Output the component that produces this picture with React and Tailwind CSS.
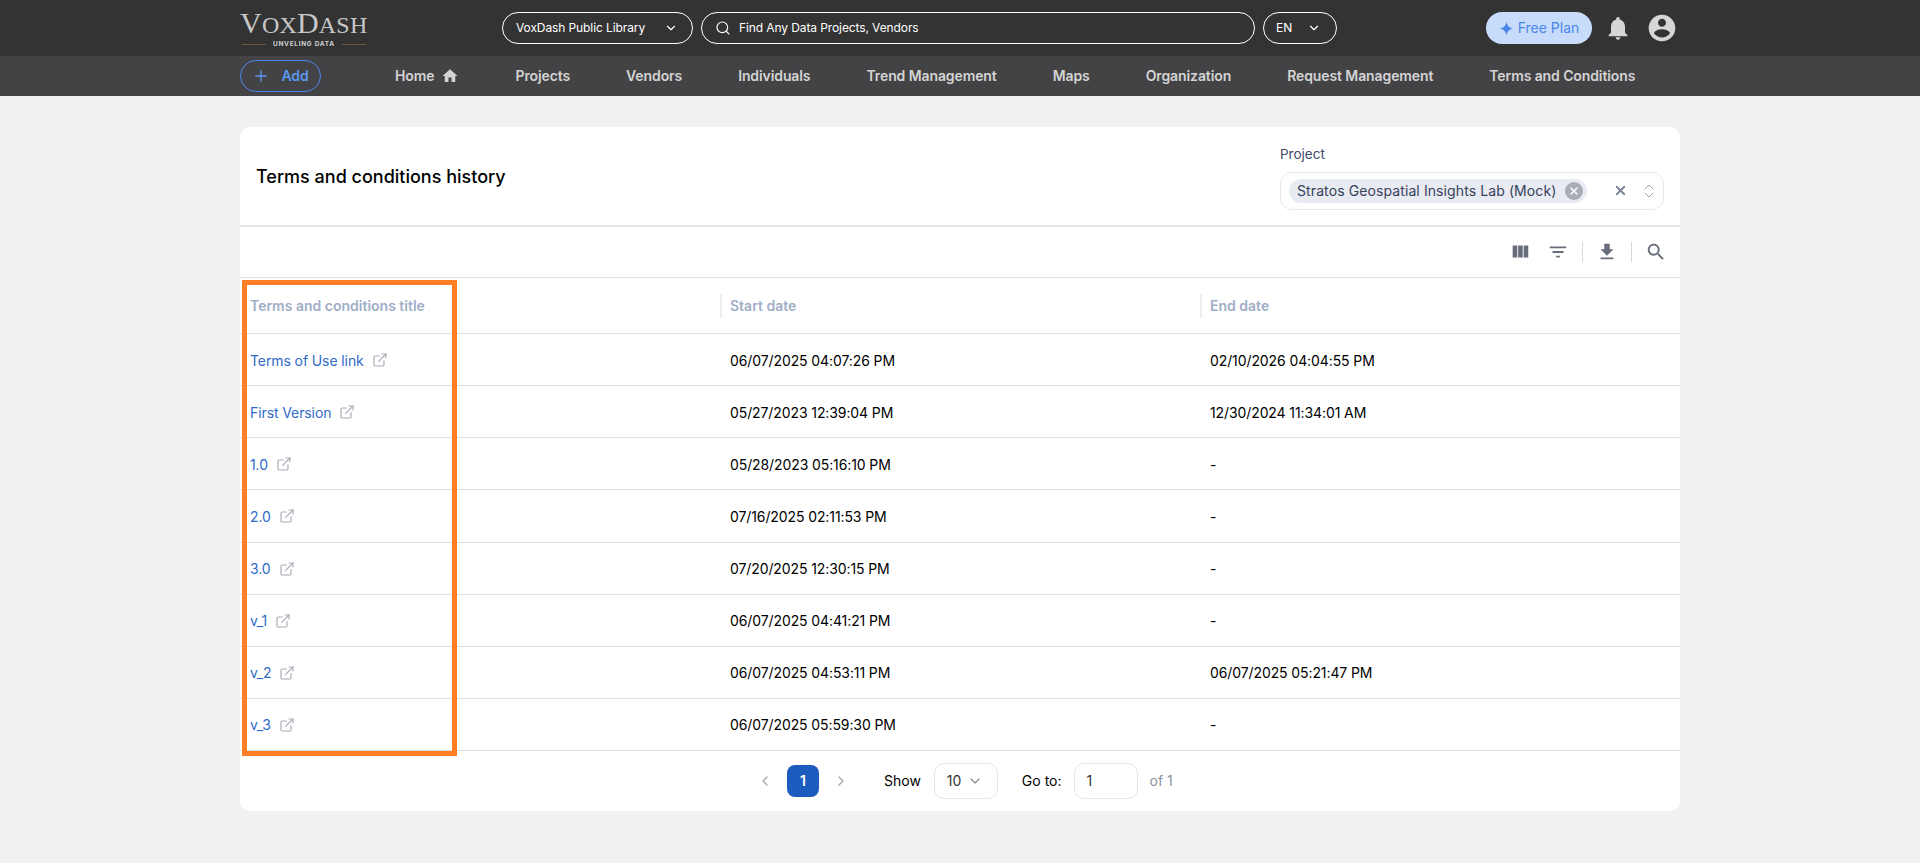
import React from "react";
import { ChevronDown, ChevronLeft, ChevronRight, ChevronUp, ExternalLink, Plus, Search, X } from "lucide-react";

const Mui = ({ d, className }) => (
  <svg viewBox="0 0 24 24" fill="currentColor" className={className}><path d={d} /></svg>
);

const icons = {
  home: "M10 20v-6h4v6h5v-8h3L12 3 2 12h3v8z",
  bell: "M12 22c1.1 0 2-.9 2-2h-4c0 1.1.89 2 2 2zm6-6v-5c0-3.07-1.64-5.64-4.5-6.32V4c0-.83-.67-1.5-1.5-1.5s-1.5.67-1.5 1.5v.68C7.63 5.36 6 7.92 6 11v5l-2 2v1h16v-1l-2-2z",
  account: "M12 2C6.48 2 2 6.48 2 12s4.48 10 10 10 10-4.48 10-10S17.52 2 12 2zm0 3c1.66 0 3 1.34 3 3s-1.34 3-3 3-3-1.34-3-3 1.34-3 3-3zm0 14.2c-2.5 0-4.71-1.28-6-3.22.03-1.99 4-3.08 6-3.08 1.99 0 5.97 1.09 6 3.08-1.29 1.94-3.5 3.22-6 3.22z",
  columns: "M10 18h5V5h-5v13zm-6 0h5V5H4v13zM16 5v13h5V5h-5z",
  filter: "M10 18h4v-2h-4v2zM3 6v2h18V6H3zm3 7h12v-2H6v2z",
  download: "M5 20h14v-2H5v2zM19 9h-4V3H9v6H5l7 7 7-7z",
  search: "M15.5 14h-.79l-.28-.27C15.41 12.59 16 11.11 16 9.5 16 5.91 13.09 3 9.5 3S3 5.91 3 9.5 5.91 16 9.5 16c1.61 0 3.09-.59 4.23-1.57l.27.28v.79l5 4.99L20.49 19l-4.99-5zm-6 0C7.01 14 5 11.99 5 9.5S7.01 5 9.5 5 14 7.01 14 9.5 11.99 14 9.5 14z",
  spark: "M12 1c1.200 6.500 4.500 9.800 11 11-6.500 1.200-9.800 4.500-11 11-1.200-6.500-4.500-9.800-11-11 6.500-1.200 9.800-4.500 11-11z",
};

const navItems = ["Projects", "Vendors", "Individuals", "Trend Management", "Maps", "Organization", "Request Management", "Terms and Conditions"];

const rows = [
  ["Terms of Use link", "06/07/2025 04:07:26 PM", "02/10/2026 04:04:55 PM"],
  ["First Version", "05/27/2023 12:39:04 PM", "12/30/2024 11:34:01 AM"],
  ["1.0", "05/28/2023 05:16:10 PM", "-"],
  ["2.0", "07/16/2025 02:11:53 PM", "-"],
  ["3.0", "07/20/2025 12:30:15 PM", "-"],
  ["v_1", "06/07/2025 04:41:21 PM", "-"],
  ["v_2", "06/07/2025 04:53:11 PM", "06/07/2025 05:21:47 PM"],
  ["v_3", "06/07/2025 05:59:30 PM", "-"],
];

export default function App() {
  return (
    <div className="min-h-screen bg-[#f1f1f3] font-['Inter',sans-serif] text-black">
      <header className="flex h-14 items-center bg-[#333333] pl-[240px]">
        <div className="flex w-[262px] flex-col items-start">
          <div className="flex h-[32px] items-baseline font-['Liberation_Serif',serif] leading-none tracking-[0.2px] text-[#c8c8c8]">
            <span className="text-[30px]">V</span><span className="text-[24px]">OX</span>
            <span className="text-[30px]">D</span><span className="text-[24px]">ASH</span>
          </div>
          <div className="flex w-[126px] items-center gap-[7px] pl-[2px]">
            <span className="h-px w-[24px] shrink-0 bg-[#6b5a2c]" />
            <span className="whitespace-nowrap text-[6.5px] font-bold leading-[8px] tracking-[0.7px] text-[#d0d0d0]">UNVELING DATA</span>
            <span className="h-px w-[24px] shrink-0 bg-[#6b5a2c]" />
          </div>
        </div>
        <div className="flex h-8 w-[191px] items-center justify-between rounded-full border border-white pl-[13px] pr-[14px] text-xs tracking-[-0.1px] text-white">
          <span>VoxDash Public Library</span>
          <ChevronDown className="h-[14px] w-[14px]" />
        </div>
        <div className="ml-2 flex h-8 w-[554px] items-center rounded-full border border-white pl-[13px] text-xs tracking-[-0.1px] text-white">
          <Search className="h-4 w-4" strokeWidth={1.75} />
          <span className="ml-[8px]">Find Any Data Projects, Vendors</span>
        </div>
        <div className="ml-2 flex h-8 w-[74px] items-center justify-between rounded-full border border-white pl-[12px] pr-[15px] text-xs font-normal text-white">
          <span>EN</span>
          <ChevronDown className="h-[14px] w-[14px]" />
        </div>
        <div className="ml-[149px] flex h-8 w-[106px] items-center justify-center gap-[4px] rounded-full bg-[#c7dcfb] text-sm text-[#4a86e8]">
          <Mui d={icons.spark} className="h-[15px] w-[15px]" />
          <span>Free Plan</span>
        </div>
        <Mui d={icons.bell} className="ml-[12px] h-7 w-7 text-[#d6d6d6]" />
        <Mui d={icons.account} className="ml-[14px] h-8 w-8 text-[#d6d6d6]" />
      </header>

      <nav className="flex h-10 items-center bg-[#434345] pl-[240px] text-sm font-semibold tracking-[-0.1px] text-[#d4d4d4]">
        <div className="flex h-8 w-[81px] items-center justify-center gap-[11px] rounded-full border border-[#4a86e8] text-[#5b97f0]">
          <Plus className="h-[18px] w-[18px]" strokeWidth={1.75} />
          <span>Add</span>
        </div>
        <div className="ml-[74px] flex items-center gap-[56px]">
          <div className="flex items-center gap-[7px]">
            <span>Home</span>
            <Mui d={icons.home} className="h-[18px] w-[18px]" />
          </div>
          {navItems.map((item) => <span key={item}>{item}</span>)}
        </div>
      </nav>

      <main className="px-[240px] pt-[31px]">
        <section className="relative rounded-[10px] bg-white">
          <div className="flex h-[100px] items-center justify-between border-b-2 border-[#e2e4ea] pl-4 pr-4">
            <h1 className="pt-[2px] text-lg font-medium">Terms and conditions history</h1>
            <div className="w-[384px] pt-px">
              <div className="text-[13.5px] leading-5 text-[#3c4a66]">Project</div>
              <div className="mt-[8px] flex h-[38px] items-center rounded-xl border border-[#e6e8ee] pl-2 pr-[6px]">
                <div className="flex h-6 items-center gap-[9px] rounded-full bg-[#e8ebf2] pl-2 pr-1 text-sm tracking-[0.1px] text-[#36415a]">
                  <span>Stratos Geospatial Insights Lab (Mock)</span>
                  <span className="flex h-[18px] w-[18px] items-center justify-center rounded-full bg-[#a8acb5] text-white">
                    <X className="h-3 w-3" strokeWidth={3} />
                  </span>
                </div>
                <X className="ml-auto h-[15px] w-[15px] text-[#7d8699]" strokeWidth={3} />
                <div className="ml-[13px] flex flex-col text-[#a0a6b4]">
                  <ChevronUp className="h-4 w-4" strokeWidth={1.5} />
                  <ChevronDown className="-mt-2 h-4 w-4" strokeWidth={1.5} />
                </div>
              </div>
            </div>
          </div>

          <div className="flex h-[51px] items-center justify-end border-b border-[#e0e0e0] pr-[13px] text-[#666c78]">
            <Mui d={icons.columns} className="h-[22px] w-[22px]" />
            <Mui d={icons.filter} className="ml-[16px] h-[22px] w-[22px]" />
            <span className="ml-[13px] h-5 w-px bg-[#d8d8d8]" />
            <Mui d={icons.download} className="ml-[13px] h-[22px] w-[22px]" />
            <span className="ml-[13px] h-5 w-px bg-[#d8d8d8]" />
            <Mui d={icons.search} className="ml-[13px] h-[22px] w-[22px]" />
          </div>

          <div className="grid h-[56px] grid-cols-3 items-center border-b border-[#e0e0e0] text-sm font-semibold text-[#a0aec8]">
            <div className="pl-[10px]">Terms and conditions title</div>
            <div className="flex h-6 items-center border-l-2 border-[#eeeeee] pl-2">Start date</div>
            <div className="flex h-6 items-center border-l-2 border-[#eeeeee] pl-2">End date</div>
          </div>

          {rows.map(([title, start, end]) => (
            <div key={title} className="grid h-[52.125px] grid-cols-3 items-center border-b border-[#e0e0e0] pt-[2px] text-sm tracking-[-0.1px]">
              <div className="flex items-center gap-[8px] pl-[10px] text-[#2f6bc7]">
                <span>{title}</span>
                <ExternalLink className="mb-[1px] h-4 w-4 text-[#a8acb8]" strokeWidth={1.75} />
              </div>
              <div className="pl-[10px]">{start}</div>
              <div className="pl-[10px]">{end}</div>
            </div>
          ))}

          <div className="flex h-[60px] items-center pl-[517px] text-sm">
            <ChevronLeft className="h-4 w-4 text-[#a8a8a8]" strokeWidth={2} />
            <span className="ml-[14px] flex h-8 w-8 items-center justify-center rounded-lg bg-[#1c5cbe] font-semibold text-white">1</span>
            <ChevronRight className="ml-[14px] h-4 w-4 text-[#a8a8a8]" strokeWidth={2} />
            <span className="ml-[35px]">Show</span>
            <div className="ml-[13px] flex h-9 w-16 items-center justify-between rounded-[10px] border border-[#e6e6e8] pl-3 pr-[14px] text-[#333]">
              <span>10</span>
              <ChevronDown className="h-4 w-4 text-[#888]" strokeWidth={1.75} />
            </div>
            <span className="ml-6">Go to:</span>
            <div className="ml-3 flex h-9 w-16 items-center rounded-[10px] border border-[#e6e6e8] pl-3 text-[#333]">1</div>
            <span className="ml-3 text-[#8a94a6]">of 1</span>
          </div>

          <div className="pointer-events-none absolute left-[2px] top-[153px] h-[476px] w-[215px] border-[5px] border-[#ff7f27]" />
        </section>
      </main>
    </div>
  );
}
